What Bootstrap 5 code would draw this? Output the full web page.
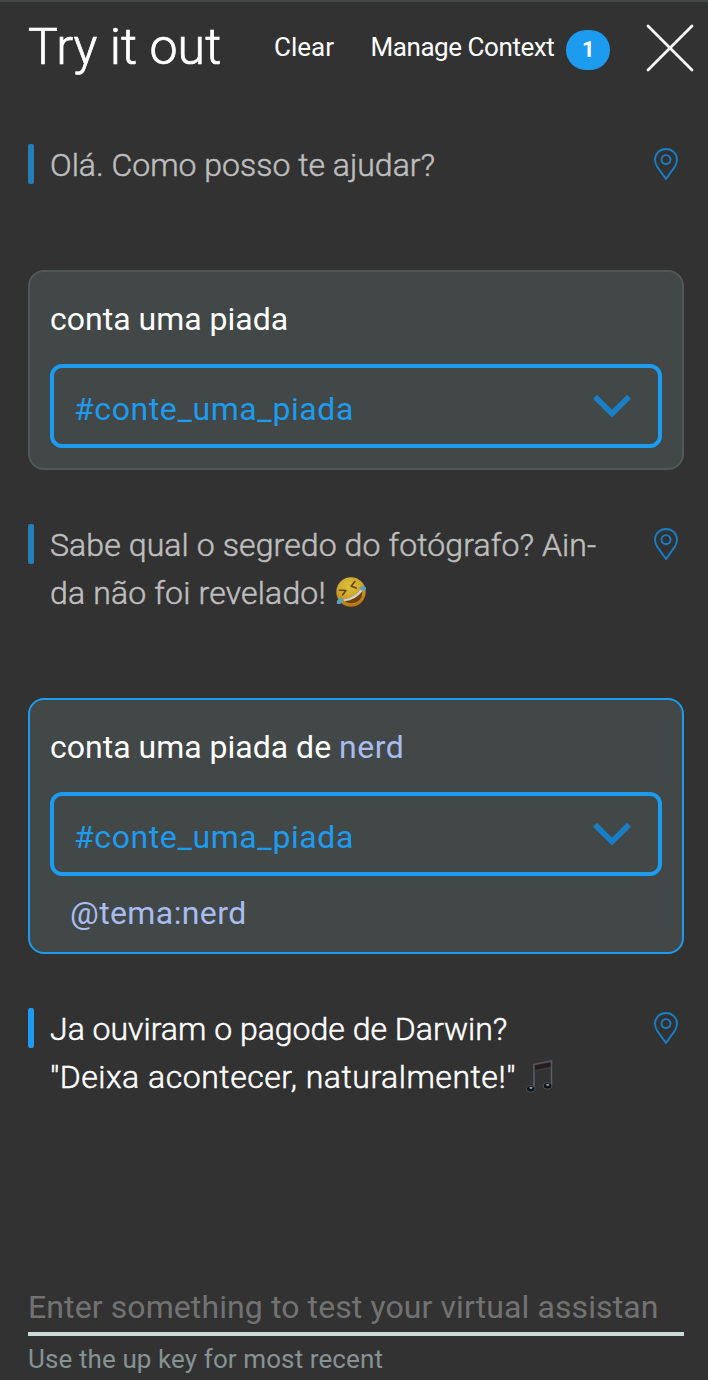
<!DOCTYPE html>
<html lang="pt-BR">
<head>
<meta charset="utf-8">
<meta name="viewport" content="width=device-width, initial-scale=1">
<title>Try it out</title>
<link href="https://cdn.jsdelivr.net/npm/bootstrap@5.3.0/dist/css/bootstrap.min.css" rel="stylesheet">
<style>
body{background:#323232;color:#fff;font-family:Roboto,"Liberation Sans",sans-serif;font-size:32px;line-height:48px}
.panel{height:1380px;border-top:2px solid #424747;padding:0 24px 0 28px;overflow:hidden}
.topbar{height:100px;margin-right:-10px}
.title{font-size:50px;font-weight:300;line-height:60px;margin-top:15px;width:246px;letter-spacing:.1px;-webkit-text-stroke:.7px}
.link-sm{font-size:26px;line-height:32px;margin-top:29px}
.link-context{margin-left:36.5px;letter-spacing:-.44px}
.count{width:44px;height:40px;margin:28px 0 0 12px;border-radius:20px;background:#1d9bef;font-size:22px;line-height:39px;font-weight:700}
.close-x{width:48px;height:48px;margin-top:22px}
.feed{height:1181px;padding-top:39px}
.reply{font-weight:300;-webkit-text-stroke:.5px}
.dim{color:#bebebe}
.bar{width:6px;height:40px;margin:3px 16px 0 0;border-radius:2px;background:#1d9bef}
.dim .bar{background:#247eb8}
.pin{width:24px;height:32px;margin:7px 6px 0 0}
.bubble{background:#424747;border:2px solid #525858;border-radius:16px;padding:23px 20px 0}
.bubble.active{border-color:#1d9bef}
.greeting{margin-bottom:81px}
.first-ask{height:200px;margin-bottom:51px}
.joke{margin-bottom:81px}
.second-ask{height:256px;margin-bottom:51px}
.intent{height:84px;border:4px solid #1d9bef;border-radius:12px;color:#1d9bef;padding:17px 27px 0 20px;margin-top:21px;letter-spacing:.6px}
.chevron{width:38px;height:24px;margin-top:9px}
.entity{color:#a8bcf0}
.found{padding:13px 0 0 20px;letter-spacing:.4px}
.ls-1{letter-spacing:.1px}
.ls-2{letter-spacing:.16px}
.ls-5{letter-spacing:.52px}
.emoji{width:32px;height:32px;margin-left:9px;vertical-align:-4px}
.note{width:27px;height:33px;margin-left:10px;vertical-align:-5px}
.ask{color:#727272;border-bottom:4px solid #cdd8da;height:53px;letter-spacing:.1px}
.hint{font-size:26px;line-height:32px;color:#869395;margin-top:7px;letter-spacing:.1px}
</style>
</head>
<body>
<svg class="d-none" xmlns="http://www.w3.org/2000/svg">
<symbol id="pin" viewBox="0 0 24 32"><path d="M12 1C5.8 1 1 5.8 1 11.7c0 2.700.9 4.800 2.300 7.200L12 31l8.700-12.100C22.100 16.500 23 14.400 23 11.700 23 5.800 18.200 1 12 1Z" fill="none" stroke="#187fc6" stroke-width="1.9" stroke-linejoin="round"/><circle cx="12" cy="11.600" r="4.500" fill="none" stroke="#187fc6" stroke-width="1.900"/></symbol>
<symbol id="chev" viewBox="0 0 38 24"><path d="M2 2.800 19 19.500 36 2.800" fill="none" stroke="#187fc6" stroke-width="5.600"/></symbol>
</svg>
<main class="panel">
<header class="topbar d-flex align-items-start">
<h1 class="title mb-0 text-nowrap">Try it out</h1>
<span class="link-sm text-nowrap">Clear</span>
<span class="link-sm link-context text-nowrap">Manage Context</span>
<span class="count text-center">1</span>
<svg class="close-x ms-auto" viewBox="0 0 48 48"><path d="M2 2 46 46M46 2 2 46" stroke="#fff" stroke-width="2.800" stroke-linecap="round"/></svg>
</header>

<section class="feed">
<div class="reply dim greeting d-flex align-items-start">
<span class="bar"></span>
<div class="flex-grow-1 text-nowrap">Olá. Como posso te ajudar?</div>
<svg class="pin"><use href="#pin"/></svg>
</div>

<div class="bubble first-ask">
<div class="text-nowrap">conta uma piada</div>
<div class="intent d-flex justify-content-between align-items-start"><span>#conte_uma_piada</span><svg class="chevron"><use href="#chev"/></svg></div>
</div>

<div class="reply dim joke d-flex align-items-start">
<span class="bar"></span>
<div class="flex-grow-1 text-nowrap"><span class="ls-1">Sabe qual o segredo do fotógrafo? Ain-</span><br><span class="ls-2">da não foi revelado!</span><svg class="emoji" viewBox="0 0 32 32">
<defs><radialGradient id="face" cx=".45" cy=".3" r=".75"><stop offset="0" stop-color="#d9c13c"/><stop offset=".55" stop-color="#cfa52c"/><stop offset="1" stop-color="#b0660f"/></radialGradient></defs>
<circle cx="16" cy="16" r="14.700" fill="url(#face)"/>
<path d="M8 23.500Q18 22.500 26.500 12.500C29 19 25.500 25 20.500 26.500 15 28.200 10.500 26.500 8 23.500Z" fill="#704209"/>
<path d="M8 23.500Q18 22.500 26.500 12.500L27.200 15.500Q20 24.500 9.700 25.200Z" fill="#d0d0cc"/>
<path d="M4.500 14.200 11 14.500 7.700 18.800M19.800 5.500 16.200 10.200 21.300 12" fill="none" stroke="#69400c" stroke-width="1.600" stroke-linecap="round" stroke-linejoin="round"/>
<path d="M24.500 11.500Q28 9 31 11.300 31.500 15 28 14.500 25.500 14 24.500 11.500Z" fill="#4fa3c6"/>
<path d="M7.500 22Q1.500 22 1.800 27.500 5 29 7 26.500 8 24.500 7.500 22Z" fill="#4fa3c6"/>
</svg></div>
<svg class="pin"><use href="#pin"/></svg>
</div>

<div class="bubble active second-ask">
<div class="text-nowrap">conta uma piada de <span class="entity ls-5">nerd</span></div>
<div class="intent d-flex justify-content-between align-items-start"><span>#conte_uma_piada</span><svg class="chevron"><use href="#chev"/></svg></div>
<div class="found entity">@tema:nerd</div>
</div>

<div class="reply d-flex align-items-start">
<span class="bar"></span>
<div class="flex-grow-1 text-nowrap"><span>Ja ouviram o pagode de Darwin?</span><br><span class="ls-5">"Deixa acontecer, naturalmente!"</span><svg class="note" viewBox="0 0 27 33">
<path d="M8 28V4.500L25.500 1V25" fill="none" stroke="#56616a" stroke-width="1.500"/>
<path d="M8.500 5 25 1.700V7.500L8.500 10.800Z" fill="#251d1f" stroke="#4b4b50" stroke-width=".8"/>
<ellipse cx="4.800" cy="28.800" rx="4.300" ry="3.200" fill="#11161b" stroke="#56616a" stroke-width=".8"/>
<ellipse cx="21.500" cy="25.800" rx="4.300" ry="3.200" fill="#11161b" stroke="#56616a" stroke-width=".8"/>
<ellipse cx="5" cy="27.800" rx="1.600" ry=".9" fill="#a9b4bb"/><ellipse cx="21.700" cy="24.800" rx="1.600" ry=".9" fill="#a9b4bb"/>
</svg></div>
<svg class="pin"><use href="#pin"/></svg>
</div>
</section>

<footer>
<div class="ask d-flex align-items-start text-nowrap">Enter something to test your virtual assistan</div>
<div class="hint">Use the up key for most recent</div>
</footer>
</main>
<script src="https://cdn.jsdelivr.net/npm/bootstrap@5.3.0/dist/js/bootstrap.bundle.min.js"></script>
</body>
</html>
